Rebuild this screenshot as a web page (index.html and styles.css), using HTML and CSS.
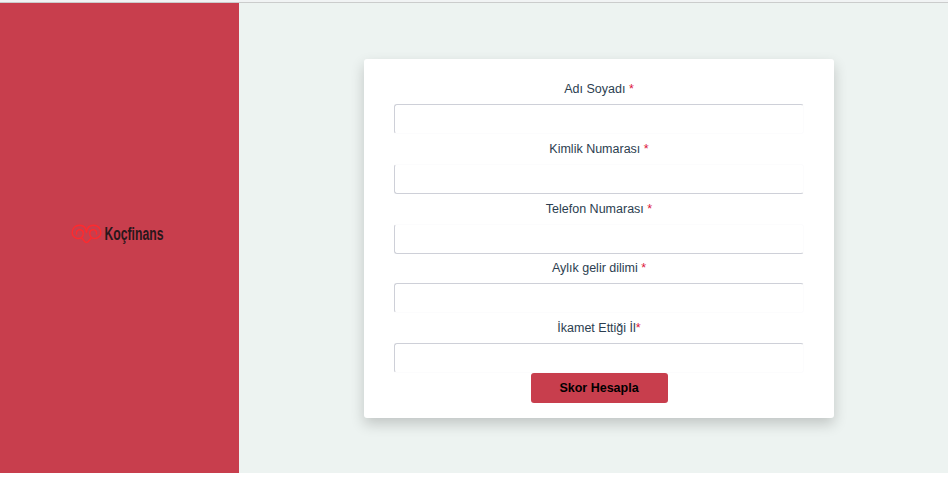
FILE: index.html
```html
<!DOCTYPE html>
<html lang="tr">
<head>
<meta charset="utf-8">
<title>Koçfinans</title>
<link rel="stylesheet" href="styles.css">
</head>
<body>
<div class="topbar"></div>
<div class="page">
  <aside class="side">
    <svg class="logo" width="96" height="28" viewBox="0 0 96 28" role="img" aria-label="Koçfinans">
      <g fill="none" stroke="#ff2a2e" stroke-width="1.4" stroke-linecap="round">
        <path d="M6.500 14C6 11 8 9.300 10.500 9.700C14 10.300 14.200 15 11.500 17.500C8 20 2.200 17.500 2.200 12.500C2.200 8 5.500 5.300 9.500 5.300C13.500 5.300 16 8 16.500 12"/>
        <path d="M26.500 14C27 11 25 9.300 22.500 9.700C19 10.300 18.800 15 21.500 17.500C25 20 30.800 17.500 30.800 12.500C30.800 8 27.500 5.300 23.500 5.300C19.500 5.300 17 8 16.500 12"/>
        <path d="M12 18.500C13.500 19 14 22.500 16.500 22.500S19.500 19 21 18.500"/>
      </g>
      <text class="logo-text" x="34.500" y="20" textLength="59" lengthAdjust="spacingAndGlyphs">Koçfinans</text>
    </svg>
  </aside>
  <main class="content">
    <form class="card">
      <label for="name">Adı Soyadı <b>*</b></label>
      <input id="name" class="no-bottom">
      <label for="identity">Kimlik Numarası <b>*</b></label>
      <input id="identity" class="no-top">
      <label for="phone">Telefon Numarası <b>*</b></label>
      <input id="phone" class="no-top tall">
      <label for="income">Aylık gelir dilimi <b>*</b></label>
      <input id="income" class="no-bottom">
      <label for="city">İkamet Ettiği İl<b>*</b></label>
      <input id="city" class="no-bottom">
      <button type="button">Skor Hesapla</button>
    </form>
  </main>
</div>
</body>
</html>
```
FILE: styles.css
```css
* { box-sizing: border-box; }
body {
  margin: 0;
  height: 477px;
  overflow: hidden;
  background: #fff;
  color: #2c3e50;
  font: 12.5px/15px "Liberation Sans", Arial, sans-serif;
}
.topbar {
  height: 3px;
  background: #f1f3f4;
  border-bottom: 1px solid #cbcccc;
}
.page { display: flex; height: 470px; }
.side {
  width: 239px;
  background: #c83e4d;
  display: flex;
  align-items: center;
  justify-content: center;
}
.logo { display: block; margin: 0 4px 8px 0; overflow: visible; }
.logo-text {
  font: bold 17.5px "Liberation Sans", Arial, sans-serif;
  fill: #28171b;
}
.content {
  flex: 1;
  background: #edf3f1;
  padding: 56px 0 0 125px;
}
.card {
  width: 470px;
  height: 359px;
  padding: 15px 30px;
  display: flex;
  flex-direction: column;
  background: #fff;
  border-radius: 3px;
  box-shadow: 0 6px 14px rgba(0, 0, 0, .19);
}
label {
  height: 30px;
  flex: none;
  line-height: 31px;
  text-align: center;
}
label b { font-weight: normal; color: #dc143c; }
input {
  width: 410px;
  height: 29.8px;
  flex: none;
  margin: 0;
  padding: 0 8px;
  background: #fff;
  border: 1px solid #ced0d8;
  border-right-color: #fcfcfd;
  border-radius: 3px;
  outline: 0;
}
.no-bottom { border-bottom-color: #fcfcfd; }
.no-top { border-top-color: #fcfcfd; }
.tall { height: 30.2px; margin-bottom: -0.4px; }
button {
  align-self: center;
  width: 137px;
  height: 30px;
  padding: 0;
  border: 0;
  border-radius: 3px;
  background: #c83e4d;
  color: #000;
  font: bold 12.5px/30px "Liberation Sans", Arial, sans-serif;
}
```
